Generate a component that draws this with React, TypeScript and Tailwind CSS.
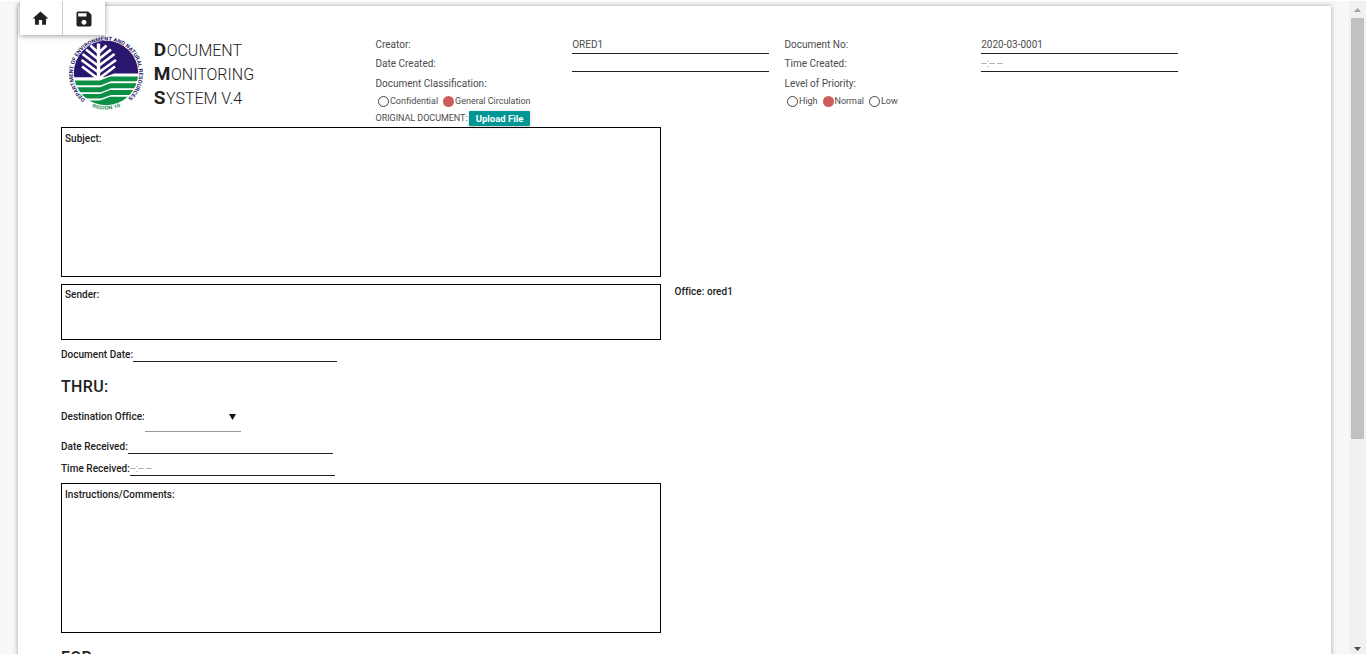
import type { ReactNode } from "react";

function Logo() {
  return (
    <svg width="80" height="80" viewBox="66 33 80 80" className="block font-['Roboto',sans-serif]">
      <defs>
        <clipPath id="disc">
          <circle cx="106" cy="73" r="32.2" />
        </clipPath>
        <path id="ringTop" d="M85.2 99.300A33.100 33.100 0 1 1 126.800 99.300" />
        <path id="ringBottom" d="M89 105.400 A36.600 36.600 0 0 0 123 105.400" />
      </defs>
      <g clipPath="url(#disc)">
        <rect x="70" y="38" width="70" height="70" fill="#fff" />
        <path d="M70 38H142V73.600H114L104 77.200H70Z" fill="#29166f" />
        <path d="M70 80.600H100L110 76.600H142V81.300H111L101 85.300H70Z" fill="#0b8f45" />
        <path d="M70 87.200H100L110 83.200H142V88.200H111L101 92.200H70Z" fill="#0b8f45" />
        <path d="M70 94H100L110 90H142V95H111L101 98.600H70Z" fill="#0b8f45" />
        <path d="M70 100.500H100L110 96.800H142V110H70Z" fill="#0b8f45" />
        <g stroke="#fff" fill="none" strokeWidth="2.7">
          <path d="M98.500 43.500V79" strokeWidth="3.400" />
          <path d="M98.500 53L90.500 45.500M98.500 53L106.500 45.500" />
          <path d="M98.500 59.500L86 49.500M98.500 59.500L111 49.500" />
          <path d="M98.500 66L82.500 54M98.500 66L114.500 54" />
          <path d="M98.500 72.500L81.500 60M98.500 72.500L116 60" />
          <path d="M98.500 79L82 66.500M98.500 79L115 66.500" />
        </g>
      </g>
      <text fontSize="5.4" fontWeight="700" fill="#2c2268">
        <textPath href="#ringTop" textLength="161" lengthAdjust="spacingAndGlyphs">
          DEPARTMENT OF ENVIRONMENT AND NATURAL RESOURCES
        </textPath>
      </text>
      <text fontSize="5" fontWeight="700" fill="#2a8f57">
        <textPath href="#ringBottom" startOffset="3.500" textLength="29" lengthAdjust="spacingAndGlyphs">
          REGION 10
        </textPath>
      </text>
    </svg>
  );
}

function TitleLine({ first, rest }: { first: string; rest: string }) {
  return (
    <div className="h-6 whitespace-nowrap text-[16px] leading-6 font-light">
      <span className="text-[19px] font-bold tracking-[0.6px]">{first}</span>
      {rest}
    </div>
  );
}

function Radio({ label, checked }: { label: string; checked?: boolean }) {
  return (
    <span className="flex items-center">
      <span
        className={
          checked
            ? "mr-px h-[11px] w-[11px] rounded-full bg-[#cd5c5c]"
            : "mr-px h-[11px] w-[11px] rounded-full border border-[#444]"
        }
      />
      <span className="text-[9px] leading-4">{label}</span>
    </span>
  );
}

function HeaderColumn({
  rows,
  heading,
  radios,
  children,
}: {
  rows: [string, string][];
  heading: string;
  radios: ReactNode;
  children?: ReactNode;
}) {
  return (
    <div className="w-[409px] text-[10px] text-[#4c4c4c]">
      {rows.map(([label, value], i) => (
        <div key={label} className="flex">
          <div
            className={
              i === 0 ? "h-[19px] w-[197px] pl-[0.5px] leading-[17px]" : "h-[18px] w-[197px] pl-[0.5px] leading-[17px]"
            }
          >
            {label}
          </div>
          <div
            className={
              i === 0
                ? "h-[18px] w-[197px] border-b border-[#212121] pl-[0.2px] leading-[17px]"
                : "h-[17px] w-[197px] border-b border-[#212121] pl-[0.2px] leading-[17px] text-[#999]"
            }
          >
            {value}
          </div>
        </div>
      ))}
      <div className="mt-0.5 h-[18px] pl-[0.5px] leading-[18px]">{heading}</div>
      <div className="flex h-4 items-center gap-[5px] pl-[3px] tracking-[-0.002em]">{radios}</div>
      {children}
    </div>
  );
}

export default function App() {
  return (
    <div className="h-[658px] w-[1368px] overflow-hidden bg-white pt-px font-['Roboto',sans-serif] text-[#212121]">
      <div className="relative flex h-[653px] w-[1366px] overflow-hidden bg-[#f8f8f8]">
        <main className="mt-[5px] ml-[18px] h-[700px] w-[1313px] shrink-0 bg-white pl-[43px] shadow-[0_0_5px_rgba(0,0,0,0.35)]">
          <header className="flex h-[121px] pt-[27px]">
            <div className="-mr-px ml-[5px] w-[88px]">
              <Logo />
            </div>
            <div className="w-[222px] pt-[5px] pl-[0.7px]">
              <TitleLine first="D" rest="OCUMENT" />
              <TitleLine first="M" rest="ONITORING" />
              <TitleLine first="S" rest="YSTEM V.4" />
            </div>
            <div className="flex pt-[3px]">
              <HeaderColumn
                rows={[
                  ["Creator:", "ORED1"],
                  ["Date Created:", ""],
                ]}
                heading="Document Classification:"
                radios={
                  <>
                    <Radio label="Confidential" />
                    <Radio label="General Circulation" checked />
                  </>
                }
              >
                <div className="mt-0.5 flex h-[15px] text-[9px]">
                  <span className="w-[94px] pl-[0.5px] leading-[14px] tracking-[-0.005em] whitespace-nowrap">
                    ORIGINAL DOCUMENT:
                  </span>
                  <button className="h-[15px] w-[61px] rounded-[1px] bg-[#009693] text-[9.5px] leading-[15px] font-bold text-white shadow-[0_1px_3px_rgba(0,0,0,0.25)]">
                    Upload File
                  </button>
                </div>
              </HeaderColumn>
              <HeaderColumn
                rows={[
                  ["Document No:", "2020-03-0001"],
                  ["Time Created:", "--:-- --"],
                ]}
                heading="Level of Priority:"
                radios={
                  <>
                    <Radio label="High" />
                    <Radio label="Normal" checked />
                    <Radio label="Low" />
                  </>
                }
              />
            </div>
          </header>

          <div className="text-[10px] font-medium tracking-[0.003em]">
            <section className="h-[150px] w-[600px] border border-black pt-[3px] pl-[3px] leading-4">Subject:</section>
            <div className="mt-[7px] flex">
              <section className="h-14 w-[600px] border border-black pt-[2px] pl-[3px] leading-4">Sender:</section>
              <div className="pl-[13.5px] leading-4">Office: ored1</div>
            </div>
            <div className="mt-[7px] flex h-[15px] leading-4">
              <span className="w-[72px] whitespace-nowrap">Document Date:</span>
              <span className="w-[204px] border-b border-[#212121]" />
            </div>
            <h2 className="mt-[13px] h-6 text-[16px] leading-6 font-medium tracking-[0.02em]">THRU:</h2>
            <div className="mt-[3px] flex h-[30px]">
              <span className="w-[84px] pt-[7px] leading-4 whitespace-nowrap">Destination Office:</span>
              <span className="flex w-24 justify-end border-b border-[#999] pt-[12px] pr-[5.5px]">
                <svg width="7" height="6" viewBox="0 0 7 6">
                  <path d="M0 0H7L3.5 6Z" fill="#111" />
                </svg>
              </span>
            </div>
            <div className="mt-[7px] flex h-[15px] leading-4">
              <span className="w-[67px] whitespace-nowrap">Date Received:</span>
              <span className="w-[205px] border-b border-[#212121]" />
            </div>
            <div className="mt-[7px] flex h-[15px] leading-4">
              <span className="w-[69px] whitespace-nowrap">Time Received:</span>
              <span className="w-[205px] border-b border-[#212121] font-normal text-[#999]">--:-- --</span>
            </div>
            <section className="mt-[7px] h-[150px] w-[600px] border border-black pt-[3px] pl-[3px] leading-4">
              Instructions/Comments:
            </section>
            <h2 className="mt-[13px] h-6 text-[16px] leading-6 font-medium tracking-[0.02em]">FOR:</h2>
          </div>
        </main>

        <nav className="absolute top-0 left-5 flex h-[34px] w-[85px] bg-white shadow-[0_1px_5px_rgba(0,0,0,0.4)]">
          <button className="flex w-[43px] items-center justify-center border-r border-[#ccc] pr-px">
            <svg width="19" height="19" viewBox="0 0 24 24" fill="#212121">
              <path d="M10 20v-6h4v6h5v-8h3L12 3 2 12h3v8z" />
            </svg>
          </button>
          <button className="flex w-[42px] items-center justify-center pt-0.5">
            <svg width="20" height="20" viewBox="0 0 24 24" fill="#212121">
              <path d="M17 3H5c-1.11 0-2 .9-2 2v14c0 1.1.89 2 2 2h14c1.1 0 2-.9 2-2V7l-4-4zm-5 16c-1.66 0-3-1.34-3-3s1.34-3 3-3 3 1.34 3 3-1.34 3-3 3zm3-10H5V5h10v4z" />
            </svg>
          </button>
        </nav>

        <aside className="ml-auto flex w-[17px] shrink-0 flex-col items-center bg-[#f1f1f1]">
          <svg width="17" height="17" viewBox="0 0 17 17" className="shrink-0">
            <path d="M5 11L8.500 7L12 11Z" fill="#a3a3a3" />
          </svg>
          <div className="h-[421px] w-[13px] bg-[#c1c1c1]" />
          <svg width="17" height="17" viewBox="0 0 17 17" className="mt-auto shrink-0">
            <path d="M5 10L8.500 14L12 10Z" fill="#505050" />
          </svg>
        </aside>
      </div>
    </div>
  );
}
